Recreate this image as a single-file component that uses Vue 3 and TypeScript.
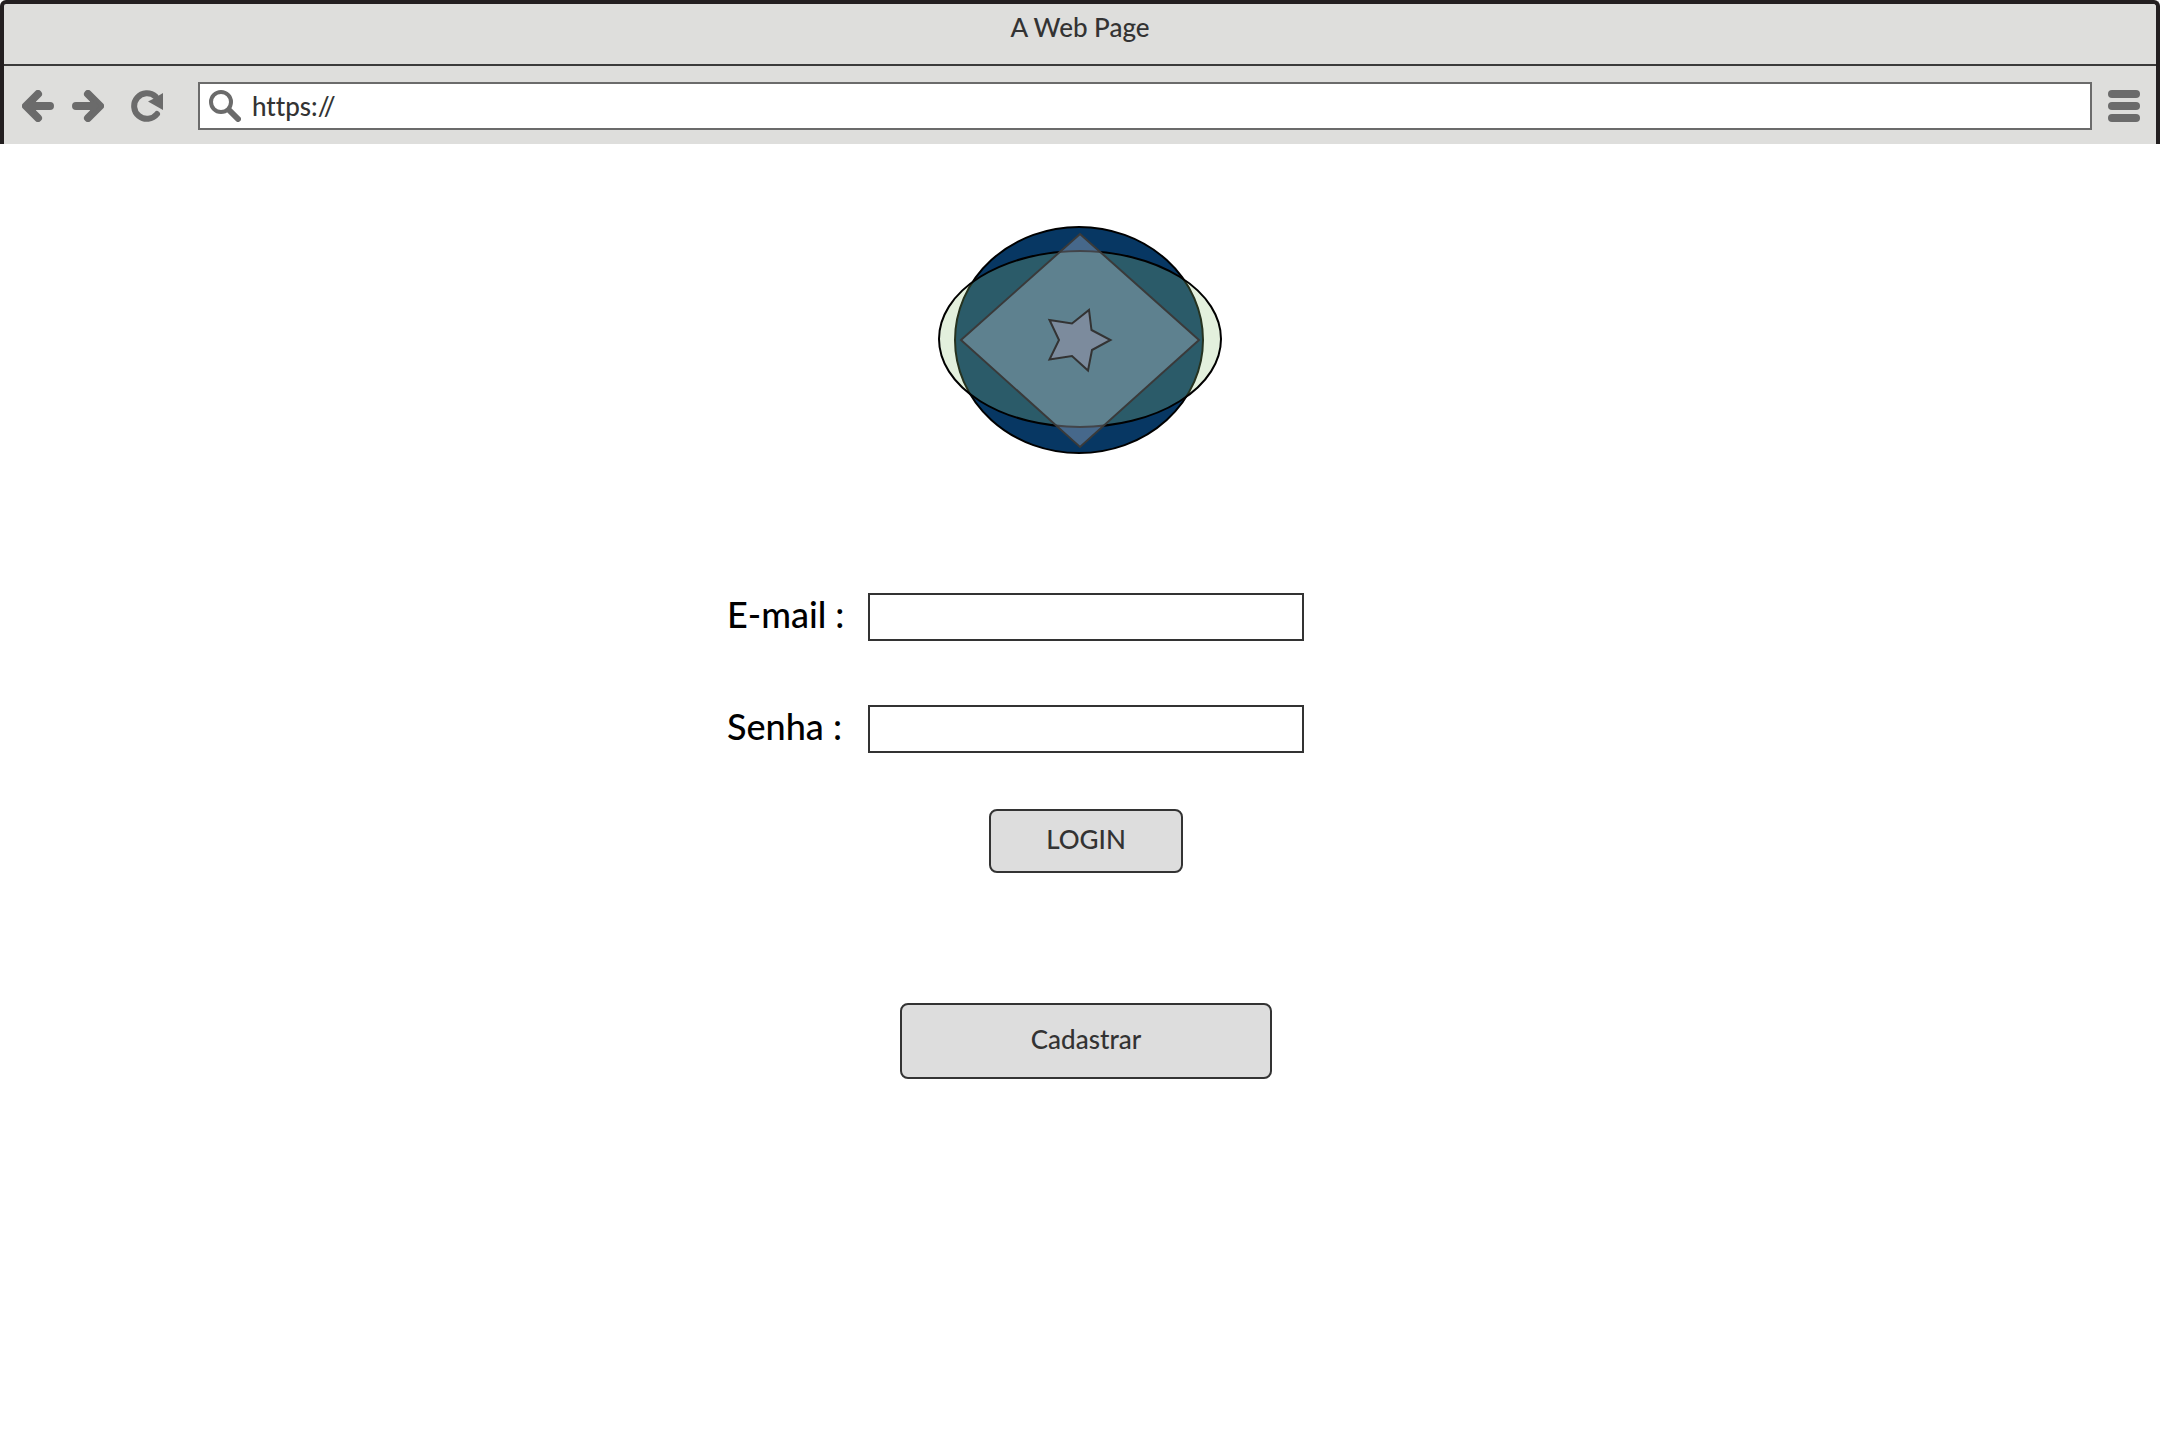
<script setup lang="ts">
import { ref } from 'vue'

const address = ref('https://')
const email = ref('')
const password = ref('')
</script>

<template>
  <div class="page">
    <header class="browser">
      <div class="title">A Web Page</div>
      <div class="toolbar">
        <button class="tool" type="button" aria-label="Back">
          <svg viewBox="0 0 32 32" class="line">
            <path d="M16 4 L4 16 L16 28 M5 16 H28" />
            <path d="M4 16 L14 8 V24 Z" class="solid" />
          </svg>
        </button>
        <button class="tool forward" type="button" aria-label="Forward">
          <svg viewBox="0 0 32 32" class="line">
            <path d="M16 4 L28 16 L16 28 M27 16 H4" />
            <path d="M28 16 L18 8 V24 Z" class="solid" />
          </svg>
        </button>
        <button class="tool reload" type="button" aria-label="Reload">
          <svg viewBox="0 0 32 32">
            <path class="arc" d="M26 24 A12.8 12.8 0 1 1 24.5 6.5" />
            <path class="solid" d="M32 3 V20 L17 11.5 L22 9 Z" />
          </svg>
        </button>
        <div class="address">
          <svg viewBox="0 0 32 32" aria-hidden="true">
            <circle class="lens" cx="12" cy="12" r="10" />
            <path class="handle" d="M20 20 L29 29" />
          </svg>
          <input v-model="address" type="text" aria-label="Address" />
        </div>
        <button class="tool menu" type="button" aria-label="Menu">
          <svg viewBox="0 0 32 32">
            <rect class="solid" y="0" width="32" height="8" rx="4" />
            <rect class="solid" y="12" width="32" height="8" rx="4" />
            <rect class="solid" y="24" width="32" height="8" rx="4" />
          </svg>
        </button>
      </div>
    </header>

    <main>
      <svg class="logo" viewBox="0 0 284 230" role="img" aria-label="Logo">
        <ellipse cx="141" cy="115" rx="124" ry="113" fill="#073763" stroke="#000" />
        <ellipse cx="142" cy="114" rx="141" ry="88" fill="#93c47d" fill-opacity="0.26" stroke="#000" />
        <path d="M142 9 L261 115 L142 222 L23 115 Z" fill="#c9cedd" fill-opacity="0.33" stroke="#3a3a3a" />
        <path
          d="M111.5 95 L134 98.5 L151 85 L153.5 105 L172.500 115 L154 125 L150 145.5 L134 131 L111.5 134.5 L121 115 Z"
          fill="#7c8b9d"
          stroke="#333"
        />
      </svg>

      <form @submit.prevent>
        <label for="email">E-mail :</label>
        <input id="email" v-model="email" type="email" />
        <label for="password">Senha :</label>
        <input id="password" v-model="password" type="password" />
        <button class="login" type="submit">LOGIN</button>
        <button class="register" type="button">Cadastrar</button>
      </form>
    </main>
  </div>
</template>

<style>
body {
  margin: 0;
  background: #fff;
}
</style>

<style scoped>
.page,
.page input,
.page button {
  font-family: Lato, "Liberation Sans", sans-serif;
  font-weight: 500;
  font-size: 26px;
  font-variant-ligatures: none;
  color: #333;
}

.page * {
  box-sizing: border-box;
}

.browser {
  border: 4px solid #231f20;
  border-bottom: 0;
  border-radius: 6px 6px 0 0;
  background: #dededc;
}

.title {
  height: 62px;
  padding-top: 7px;
  border-bottom: 2px solid #3b3b3b;
  line-height: 32px;
  text-align: center;
}

.toolbar {
  display: flex;
  align-items: center;
  height: 78px;
  padding: 2px 16px 0 18px;
}

.tool {
  flex: none;
  width: 32px;
  height: 32px;
  padding: 0;
  border: 0;
  background: none;
}

.forward {
  margin-left: 18px;
}

.reload {
  margin-left: 27px;
}

.menu {
  margin-left: 16px;
}

.toolbar svg {
  display: block;
  flex: none;
  width: 32px;
  height: 32px;
  fill: none;
  stroke: #6b6b6b;
}

.line {
  stroke-width: 8;
  stroke-linecap: round;
  stroke-linejoin: round;
}

.toolbar .solid {
  fill: #6b6b6b;
  stroke: none;
}

.arc {
  stroke-width: 6;
  stroke-linecap: round;
}

.lens {
  stroke-width: 4;
}

.handle {
  stroke-width: 6;
  stroke-linecap: round;
}

.address {
  display: flex;
  flex: 1;
  align-items: center;
  height: 48px;
  margin-left: 35px;
  padding-left: 9px;
  border: 2px solid #6b6b6b;
  background: #fff;
}

.address input {
  flex: 1;
  min-width: 0;
  height: 44px;
  margin-left: 11px;
  padding: 0;
  border: 0;
  background: none;
}

main {
  display: flex;
  flex-direction: column;
  align-items: center;
  padding: 81px 0 40px;
}

.logo {
  width: 284px;
  height: 230px;
  stroke-width: 2;
}

form {
  display: grid;
  grid-template-columns: 141px 436px 129px;
  margin-top: 138px;
}

label {
  grid-column: 1;
  height: 48px;
  font-size: 36px;
  line-height: 42px;
  color: #000;
}

form input {
  grid-column: 2;
  height: 48px;
  margin-bottom: 64px;
  padding: 0 8px;
  border: 2px solid #333;
  background: #fff;
}

form button {
  grid-column: 2;
  justify-self: center;
  padding: 0 0 4px;
  border: 2px solid #333;
  border-radius: 8px;
  background: #ddd;
}

.login {
  width: 194px;
  height: 64px;
  margin-top: -8px;
}

.register {
  width: 372px;
  height: 76px;
  margin-top: 130px;
}
</style>
